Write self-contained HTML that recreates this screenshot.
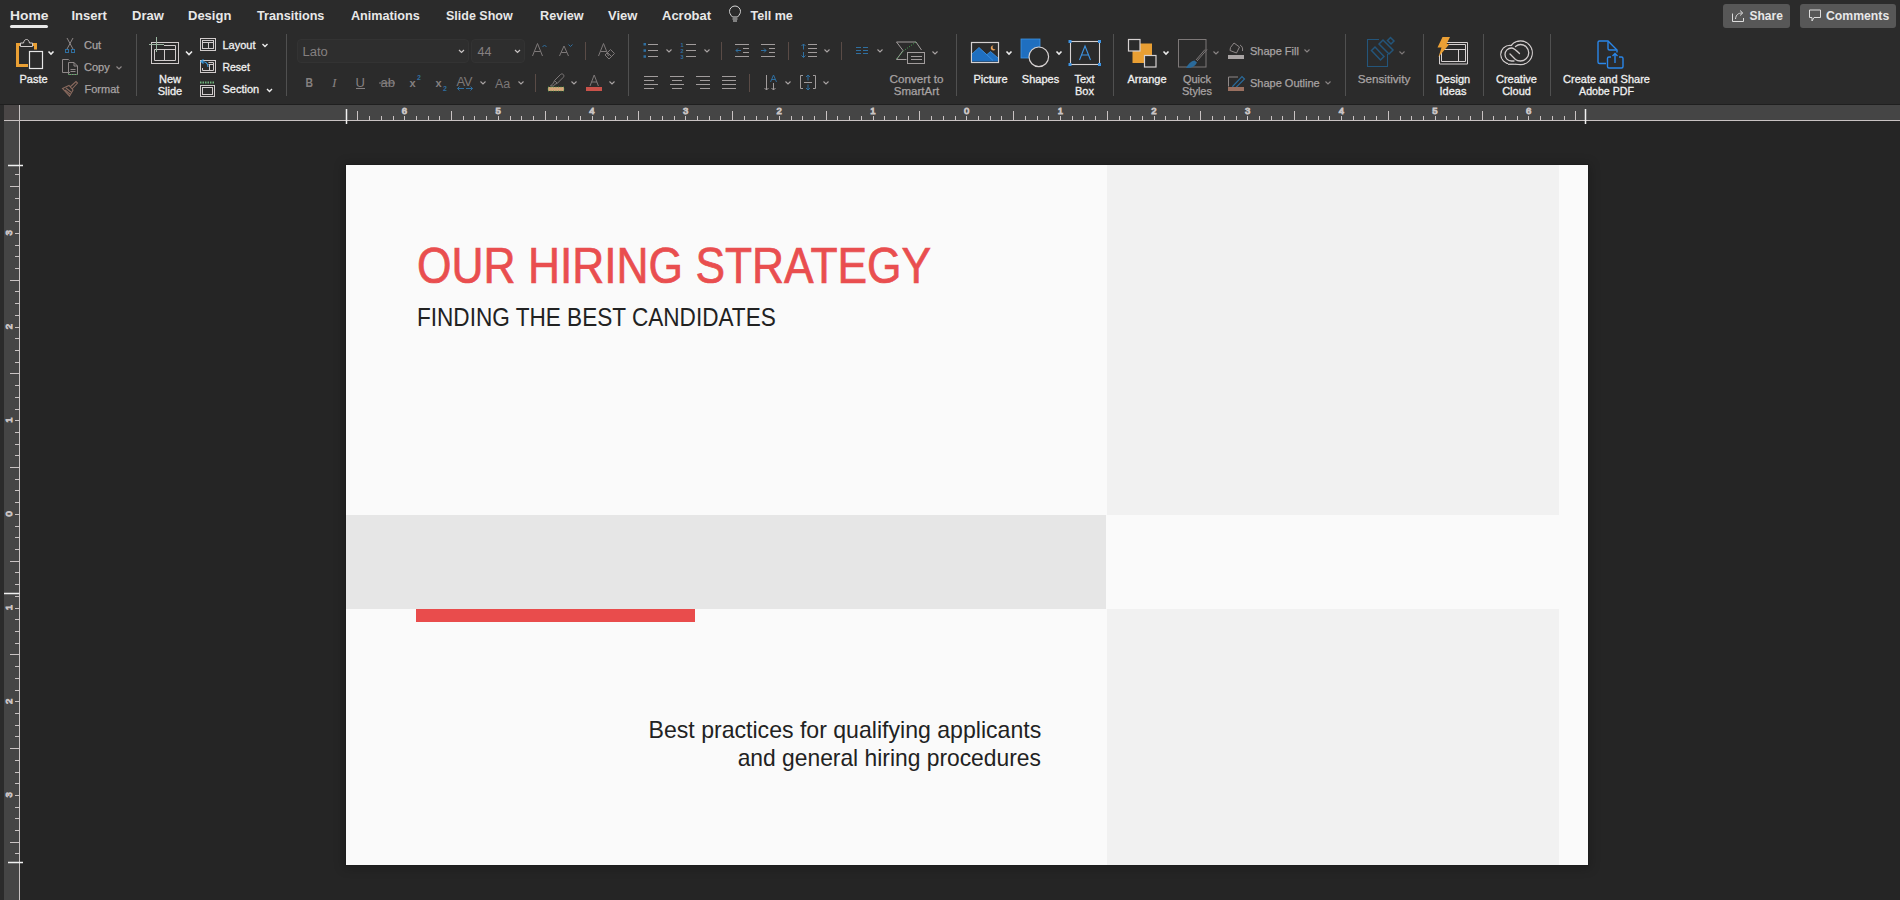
<!DOCTYPE html>
<html><head><meta charset="utf-8">
<style>
*{margin:0;padding:0;box-sizing:border-box}
html,body{width:1900px;height:900px;overflow:hidden;background:#252525;font-family:"Liberation Sans",sans-serif;position:relative}
.abs{position:absolute}
svg{position:absolute;left:0;top:0;overflow:visible}
.rn{font-family:"Liberation Sans",sans-serif;font-size:9.5px;fill:#c8c8c8;text-anchor:middle}
#slide{position:absolute;left:346px;top:165px;width:1242px;height:700px;background:#fafafa;overflow:hidden;box-shadow:0 0 0 1px #1d1d1d,0 1px 10px 2px rgba(0,0,0,0.22)}
.t{position:absolute;white-space:nowrap;font-family:"Liberation Sans",sans-serif}
</style></head><body>
<svg width="1900" height="900" style="z-index:0">
<rect x="0" y="0" width="1900" height="104" fill="#2b2b2b"/>
<rect x="0" y="104" width="1900" height="1" fill="#1f1f1f"/>
<rect x="0" y="105" width="4" height="795" fill="#2b2b2b"/>
<rect x="4" y="105" width="1896" height="15" fill="#454545"/>
<rect x="4" y="120" width="15" height="780" fill="#454545"/>
<rect x="4" y="105" width="15" height="15" fill="#4a4646"/>
<g stroke="#c9c3c3" stroke-width="1" fill="none">
<line x1="4" y1="120.5" x2="1900" y2="120.5"/>
<line x1="19.5" y1="105" x2="19.5" y2="900"/>
<line x1="357.5" y1="111" x2="357.5" y2="120"/>
<line x1="369.5" y1="116" x2="369.5" y2="120"/>
<line x1="381.5" y1="116" x2="381.5" y2="120"/>
<line x1="393.5" y1="116" x2="393.5" y2="120"/>
<line x1="404.5" y1="116" x2="404.5" y2="120"/>
<text x="404.5" y="114" class="rn">6</text>
<line x1="416.5" y1="116" x2="416.5" y2="120"/>
<line x1="428.5" y1="116" x2="428.5" y2="120"/>
<line x1="439.5" y1="116" x2="439.5" y2="120"/>
<line x1="451.5" y1="111" x2="451.5" y2="120"/>
<line x1="463.5" y1="116" x2="463.5" y2="120"/>
<line x1="474.5" y1="116" x2="474.5" y2="120"/>
<line x1="486.5" y1="116" x2="486.5" y2="120"/>
<line x1="498.5" y1="116" x2="498.5" y2="120"/>
<text x="498.2" y="114" class="rn">5</text>
<line x1="510.5" y1="116" x2="510.5" y2="120"/>
<line x1="521.5" y1="116" x2="521.5" y2="120"/>
<line x1="533.5" y1="116" x2="533.5" y2="120"/>
<line x1="545.5" y1="111" x2="545.5" y2="120"/>
<line x1="556.5" y1="116" x2="556.5" y2="120"/>
<line x1="568.5" y1="116" x2="568.5" y2="120"/>
<line x1="580.5" y1="116" x2="580.5" y2="120"/>
<line x1="592.5" y1="116" x2="592.5" y2="120"/>
<text x="591.9" y="114" class="rn">4</text>
<line x1="603.5" y1="116" x2="603.5" y2="120"/>
<line x1="615.5" y1="116" x2="615.5" y2="120"/>
<line x1="627.5" y1="116" x2="627.5" y2="120"/>
<line x1="638.5" y1="111" x2="638.5" y2="120"/>
<line x1="650.5" y1="116" x2="650.5" y2="120"/>
<line x1="662.5" y1="116" x2="662.5" y2="120"/>
<line x1="674.5" y1="116" x2="674.5" y2="120"/>
<line x1="685.5" y1="116" x2="685.5" y2="120"/>
<text x="685.6" y="114" class="rn">3</text>
<line x1="697.5" y1="116" x2="697.5" y2="120"/>
<line x1="709.5" y1="116" x2="709.5" y2="120"/>
<line x1="720.5" y1="116" x2="720.5" y2="120"/>
<line x1="732.5" y1="111" x2="732.5" y2="120"/>
<line x1="744.5" y1="116" x2="744.5" y2="120"/>
<line x1="756.5" y1="116" x2="756.5" y2="120"/>
<line x1="767.5" y1="116" x2="767.5" y2="120"/>
<line x1="779.5" y1="116" x2="779.5" y2="120"/>
<text x="779.2" y="114" class="rn">2</text>
<line x1="791.5" y1="116" x2="791.5" y2="120"/>
<line x1="802.5" y1="116" x2="802.5" y2="120"/>
<line x1="814.5" y1="116" x2="814.5" y2="120"/>
<line x1="826.5" y1="111" x2="826.5" y2="120"/>
<line x1="837.5" y1="116" x2="837.5" y2="120"/>
<line x1="849.5" y1="116" x2="849.5" y2="120"/>
<line x1="861.5" y1="116" x2="861.5" y2="120"/>
<line x1="873.5" y1="116" x2="873.5" y2="120"/>
<text x="872.9" y="114" class="rn">1</text>
<line x1="884.5" y1="116" x2="884.5" y2="120"/>
<line x1="896.5" y1="116" x2="896.5" y2="120"/>
<line x1="908.5" y1="116" x2="908.5" y2="120"/>
<line x1="919.5" y1="111" x2="919.5" y2="120"/>
<line x1="931.5" y1="116" x2="931.5" y2="120"/>
<line x1="943.5" y1="116" x2="943.5" y2="120"/>
<line x1="955.5" y1="116" x2="955.5" y2="120"/>
<line x1="966.5" y1="116" x2="966.5" y2="120"/>
<text x="966.6" y="114" class="rn">0</text>
<line x1="978.5" y1="116" x2="978.5" y2="120"/>
<line x1="990.5" y1="116" x2="990.5" y2="120"/>
<line x1="1001.5" y1="116" x2="1001.5" y2="120"/>
<line x1="1013.5" y1="111" x2="1013.5" y2="120"/>
<line x1="1025.5" y1="116" x2="1025.5" y2="120"/>
<line x1="1037.5" y1="116" x2="1037.5" y2="120"/>
<line x1="1048.5" y1="116" x2="1048.5" y2="120"/>
<line x1="1060.5" y1="116" x2="1060.5" y2="120"/>
<text x="1060.3" y="114" class="rn">1</text>
<line x1="1072.5" y1="116" x2="1072.5" y2="120"/>
<line x1="1083.5" y1="116" x2="1083.5" y2="120"/>
<line x1="1095.5" y1="116" x2="1095.5" y2="120"/>
<line x1="1107.5" y1="111" x2="1107.5" y2="120"/>
<line x1="1119.5" y1="116" x2="1119.5" y2="120"/>
<line x1="1130.5" y1="116" x2="1130.5" y2="120"/>
<line x1="1142.5" y1="116" x2="1142.5" y2="120"/>
<line x1="1154.5" y1="116" x2="1154.5" y2="120"/>
<text x="1154.0" y="114" class="rn">2</text>
<line x1="1165.5" y1="116" x2="1165.5" y2="120"/>
<line x1="1177.5" y1="116" x2="1177.5" y2="120"/>
<line x1="1189.5" y1="116" x2="1189.5" y2="120"/>
<line x1="1200.5" y1="111" x2="1200.5" y2="120"/>
<line x1="1212.5" y1="116" x2="1212.5" y2="120"/>
<line x1="1224.5" y1="116" x2="1224.5" y2="120"/>
<line x1="1236.5" y1="116" x2="1236.5" y2="120"/>
<line x1="1247.5" y1="116" x2="1247.5" y2="120"/>
<text x="1247.6" y="114" class="rn">3</text>
<line x1="1259.5" y1="116" x2="1259.5" y2="120"/>
<line x1="1271.5" y1="116" x2="1271.5" y2="120"/>
<line x1="1282.5" y1="116" x2="1282.5" y2="120"/>
<line x1="1294.5" y1="111" x2="1294.5" y2="120"/>
<line x1="1306.5" y1="116" x2="1306.5" y2="120"/>
<line x1="1318.5" y1="116" x2="1318.5" y2="120"/>
<line x1="1329.5" y1="116" x2="1329.5" y2="120"/>
<line x1="1341.5" y1="116" x2="1341.5" y2="120"/>
<text x="1341.3" y="114" class="rn">4</text>
<line x1="1353.5" y1="116" x2="1353.5" y2="120"/>
<line x1="1364.5" y1="116" x2="1364.5" y2="120"/>
<line x1="1376.5" y1="116" x2="1376.5" y2="120"/>
<line x1="1388.5" y1="111" x2="1388.5" y2="120"/>
<line x1="1400.5" y1="116" x2="1400.5" y2="120"/>
<line x1="1411.5" y1="116" x2="1411.5" y2="120"/>
<line x1="1423.5" y1="116" x2="1423.5" y2="120"/>
<line x1="1435.5" y1="116" x2="1435.5" y2="120"/>
<text x="1435.0" y="114" class="rn">5</text>
<line x1="1446.5" y1="116" x2="1446.5" y2="120"/>
<line x1="1458.5" y1="116" x2="1458.5" y2="120"/>
<line x1="1470.5" y1="116" x2="1470.5" y2="120"/>
<line x1="1482.5" y1="111" x2="1482.5" y2="120"/>
<line x1="1493.5" y1="116" x2="1493.5" y2="120"/>
<line x1="1505.5" y1="116" x2="1505.5" y2="120"/>
<line x1="1517.5" y1="116" x2="1517.5" y2="120"/>
<line x1="1528.5" y1="116" x2="1528.5" y2="120"/>
<text x="1528.7" y="114" class="rn">6</text>
<line x1="1540.5" y1="116" x2="1540.5" y2="120"/>
<line x1="1552.5" y1="116" x2="1552.5" y2="120"/>
<line x1="1564.5" y1="116" x2="1564.5" y2="120"/>
<line x1="1575.5" y1="111" x2="1575.5" y2="120"/>
<line x1="15" y1="174.5" x2="19" y2="174.5"/>
<line x1="10" y1="186.5" x2="19" y2="186.5"/>
<line x1="15" y1="198.5" x2="19" y2="198.5"/>
<line x1="15" y1="209.5" x2="19" y2="209.5"/>
<line x1="15" y1="221.5" x2="19" y2="221.5"/>
<line x1="15" y1="233.5" x2="19" y2="233.5"/>
<text transform="translate(12 232.9) rotate(-90)" class="rn">3</text>
<line x1="15" y1="245.5" x2="19" y2="245.5"/>
<line x1="15" y1="256.5" x2="19" y2="256.5"/>
<line x1="15" y1="268.5" x2="19" y2="268.5"/>
<line x1="10" y1="280.5" x2="19" y2="280.5"/>
<line x1="15" y1="291.5" x2="19" y2="291.5"/>
<line x1="15" y1="303.5" x2="19" y2="303.5"/>
<line x1="15" y1="315.5" x2="19" y2="315.5"/>
<line x1="15" y1="327.5" x2="19" y2="327.5"/>
<text transform="translate(12 326.5) rotate(-90)" class="rn">2</text>
<line x1="15" y1="338.5" x2="19" y2="338.5"/>
<line x1="15" y1="350.5" x2="19" y2="350.5"/>
<line x1="15" y1="362.5" x2="19" y2="362.5"/>
<line x1="10" y1="373.5" x2="19" y2="373.5"/>
<line x1="15" y1="385.5" x2="19" y2="385.5"/>
<line x1="15" y1="397.5" x2="19" y2="397.5"/>
<line x1="15" y1="409.5" x2="19" y2="409.5"/>
<line x1="15" y1="420.5" x2="19" y2="420.5"/>
<text transform="translate(12 420.2) rotate(-90)" class="rn">1</text>
<line x1="15" y1="432.5" x2="19" y2="432.5"/>
<line x1="15" y1="444.5" x2="19" y2="444.5"/>
<line x1="15" y1="455.5" x2="19" y2="455.5"/>
<line x1="10" y1="467.5" x2="19" y2="467.5"/>
<line x1="15" y1="479.5" x2="19" y2="479.5"/>
<line x1="15" y1="490.5" x2="19" y2="490.5"/>
<line x1="15" y1="502.5" x2="19" y2="502.5"/>
<line x1="15" y1="514.5" x2="19" y2="514.5"/>
<text transform="translate(12 513.9) rotate(-90)" class="rn">0</text>
<line x1="15" y1="526.5" x2="19" y2="526.5"/>
<line x1="15" y1="537.5" x2="19" y2="537.5"/>
<line x1="15" y1="549.5" x2="19" y2="549.5"/>
<line x1="10" y1="561.5" x2="19" y2="561.5"/>
<line x1="15" y1="572.5" x2="19" y2="572.5"/>
<line x1="15" y1="584.5" x2="19" y2="584.5"/>
<line x1="15" y1="596.5" x2="19" y2="596.5"/>
<line x1="15" y1="608.5" x2="19" y2="608.5"/>
<text transform="translate(12 607.6) rotate(-90)" class="rn">1</text>
<line x1="15" y1="619.5" x2="19" y2="619.5"/>
<line x1="15" y1="631.5" x2="19" y2="631.5"/>
<line x1="15" y1="643.5" x2="19" y2="643.5"/>
<line x1="10" y1="654.5" x2="19" y2="654.5"/>
<line x1="15" y1="666.5" x2="19" y2="666.5"/>
<line x1="15" y1="678.5" x2="19" y2="678.5"/>
<line x1="15" y1="690.5" x2="19" y2="690.5"/>
<line x1="15" y1="701.5" x2="19" y2="701.5"/>
<text transform="translate(12 701.3) rotate(-90)" class="rn">2</text>
<line x1="15" y1="713.5" x2="19" y2="713.5"/>
<line x1="15" y1="725.5" x2="19" y2="725.5"/>
<line x1="15" y1="736.5" x2="19" y2="736.5"/>
<line x1="10" y1="748.5" x2="19" y2="748.5"/>
<line x1="15" y1="760.5" x2="19" y2="760.5"/>
<line x1="15" y1="772.5" x2="19" y2="772.5"/>
<line x1="15" y1="783.5" x2="19" y2="783.5"/>
<line x1="15" y1="795.5" x2="19" y2="795.5"/>
<text transform="translate(12 794.9) rotate(-90)" class="rn">3</text>
<line x1="15" y1="807.5" x2="19" y2="807.5"/>
<line x1="15" y1="818.5" x2="19" y2="818.5"/>
<line x1="15" y1="830.5" x2="19" y2="830.5"/>
<line x1="10" y1="842.5" x2="19" y2="842.5"/>
<line x1="15" y1="853.5" x2="19" y2="853.5"/>
</g>
<g stroke="#f0f0f0" stroke-width="1.5" fill="none">
<line x1="346.5" y1="109" x2="346.5" y2="124"/>
<line x1="1585.5" y1="109" x2="1585.5" y2="124"/>
<line x1="8" y1="165.5" x2="23" y2="165.5"/>
<line x1="8" y1="862.5" x2="23" y2="862.5"/>
<line x1="4" y1="593.5" x2="19.5" y2="593.5"/>
</g>

<style>
.tb{font-family:"Liberation Sans",sans-serif;font-size:13px;font-weight:bold;fill:#e8e8e8}
.lb{font-family:"Liberation Sans",sans-serif;font-size:11px;fill:#f0f0f0;stroke:#f0f0f0;stroke-width:0.3px}
.lg{font-family:"Liberation Sans",sans-serif;font-size:11px;fill:#a8a3a3;stroke:#a8a3a3;stroke-width:0.25px}
.lc{text-anchor:middle}
</style>
<!-- tabs -->
<text textLength="38.5" lengthAdjust="spacingAndGlyphs" class="tb" x="10" y="20">Home</text>
<rect x="10" y="25" width="38" height="3" rx="1.5" fill="#e8e8e8"/>
<text class="tb" x="71.5" y="20">Insert</text>
<text class="tb" x="132" y="20">Draw</text>
<text class="tb" x="188" y="20">Design</text>
<text textLength="67.4" lengthAdjust="spacingAndGlyphs" class="tb" x="257" y="20">Transitions</text>
<text textLength="68.8" lengthAdjust="spacingAndGlyphs" class="tb" x="351" y="20">Animations</text>
<text textLength="66.7" lengthAdjust="spacingAndGlyphs" class="tb" x="446" y="20">Slide Show</text>
<text textLength="43.6" lengthAdjust="spacingAndGlyphs" class="tb" x="540" y="20">Review</text>
<text class="tb" x="608" y="20">View</text>
<text class="tb" x="662" y="20">Acrobat</text>
<g fill="none" stroke="#d8d8d8" stroke-width="1">
<path d="M732.5 17 C730 14.5 729.5 12.5 729.5 11.5 A5.5 5.5 0 0 1 740.5 11.5 C740.5 12.5 740 14.5 737.5 17 Z"/>
<line x1="732.5" y1="19" x2="737.5" y2="19"/>
<line x1="733" y1="21" x2="737" y2="21"/>
</g>
<text textLength="42.3" lengthAdjust="spacingAndGlyphs" class="tb" x="750.5" y="20">Tell me</text>
<!-- share / comments -->
<rect x="1723" y="4" width="67" height="24" rx="3" fill="#575757"/>
<text textLength="33.3" lengthAdjust="spacingAndGlyphs" class="tb" x="1749.5" y="19.8">Share</text>
<g fill="none" stroke="#dcdcdc" stroke-width="1">
<path d="M1732.5 13.5 V21.5 H1743.5 V18"/>
<path d="M1735.5 19 C1736 14.5 1738.5 13 1742 13 M1740 10.5 L1742.8 13 L1740 15.5"/>
</g>
<rect x="1800" y="4" width="96" height="24" rx="3" fill="#575757"/>
<text textLength="63.2" lengthAdjust="spacingAndGlyphs" class="tb" x="1826" y="19.8">Comments</text>
<path d="M1809.5 10 H1820.5 V17.5 H1814 L1812 21 V17.5 H1809.5 Z" fill="none" stroke="#dcdcdc" stroke-width="1"/>

<!-- separators -->
<g stroke="#505050" stroke-width="1">
<line x1="136.5" y1="34" x2="136.5" y2="96"/>
<line x1="286.5" y1="34" x2="286.5" y2="96"/>
<line x1="628.5" y1="34" x2="628.5" y2="96"/>
<line x1="956.5" y1="34" x2="956.5" y2="96"/>
<line x1="1113.5" y1="34" x2="1113.5" y2="96"/>
<line x1="1345.5" y1="34" x2="1345.5" y2="96"/>
<line x1="1423.5" y1="34" x2="1423.5" y2="96"/>
<line x1="1483.5" y1="34" x2="1483.5" y2="96"/>
<line x1="1550.5" y1="34" x2="1550.5" y2="96"/>
</g>
<g stroke="#5a4b46" stroke-width="1">
<line x1="585.5" y1="42" x2="585.5" y2="60"/>
<line x1="535.5" y1="74" x2="535.5" y2="92"/>
<line x1="721.5" y1="42" x2="721.5" y2="60"/>
<line x1="788.5" y1="42" x2="788.5" y2="60"/>
<line x1="841.5" y1="42" x2="841.5" y2="60"/>
<line x1="749.5" y1="74" x2="749.5" y2="92"/>
</g>

<!-- Clipboard group -->
<path d="M17.5 44.5 V65.5 H28" fill="none" stroke="#eaa034" stroke-width="3"/>
<path d="M16 44.5 H20.5 M32.5 44.5 H35.5 V49.5" fill="none" stroke="#eaa034" stroke-width="3"/>
<path d="M20.5 46.5 V43 H23.5 C24 40.5 25 39.5 26.5 39.5 C28 39.5 29 40.5 29.5 43 H32.5 V46.5 Z" fill="#2b2b2b" stroke="#cfcaca" stroke-width="1"/>
<rect x="29.5" y="51.5" width="13" height="17" fill="none" stroke="#e6e6e6" stroke-width="1.2"/>
<path d="M48.5 51.5 L51 54 L53.5 51.5" fill="none" stroke="#ececec" stroke-width="1.6"/>
<text class="lb" x="19.5" y="83">Paste</text>

<g fill="none" stroke="#8e8888" stroke-width="1">
<path d="M67 38 L73 49 M73 38 L67 49"/>
</g>
<rect x="65.5" y="49.5" width="3" height="3" fill="none" stroke="#2f6fa0" stroke-width="1"/>
<rect x="71.5" y="49.5" width="3" height="3" fill="none" stroke="#2f6fa0" stroke-width="1"/>
<text class="lg" x="84" y="49">Cut</text>
<g fill="none" stroke="#8e8888" stroke-width="1">
<path d="M70 72.5 H62.5 V59.5 H68.5 L69.5 60.5"/>
<path d="M68.5 74.5 V62.5 H74 L77.5 66 V74.5 Z M74 62.5 V66 H77.5"/>
<path d="M70.5 69.5 H75.5 M70.5 71.5 H75.5"/>
</g>
<line x1="68.5" y1="74.5" x2="77.5" y2="74.5" stroke="#3aa04a" stroke-width="1" stroke-dasharray="1 1.5"/>
<text class="lg" x="84" y="71">Copy</text>
<path d="M116.5 66.5 L119 69 L121.5 66.5" fill="none" stroke="#8e8888" stroke-width="1.2"/>
<g fill="none" stroke="#8a6a5e" stroke-width="1.1">
<path d="M70 87 L76 81.5 L77.5 83 L72 89"/>
<path d="M62.5 88.5 L69 85.5 L73 90 L69.5 96 Z"/>
<path d="M65 90 L70 94 M66 88 L71 92"/>
</g>
<text class="lg" x="84.5" y="93">Format</text>

<!-- Slides group -->
<g fill="none" stroke="#d0cbcb" stroke-width="1">
<rect x="151.5" y="42.5" width="27" height="21"/>
<path d="M164 45.5 H175.5 V60.5 H154.5 V49.5 M154.5 49.5 H175.5 M164.5 49.5 V60.5"/>
</g>
<g stroke="#9ab5a0" stroke-width="1" fill="none">
<line x1="156.5" y1="37" x2="156.5" y2="52"/>
<line x1="149" y1="44.5" x2="164" y2="44.5"/>
</g>
<path d="M186 51.5 L189 54.5 L192 51.5" fill="none" stroke="#ececec" stroke-width="1.6"/>
<text class="lb lc" x="170" y="83">New</text>
<text class="lb lc" x="170" y="95">Slide</text>

<g fill="none" stroke="#d0cbcb" stroke-width="1">
<rect x="200.5" y="38.5" width="15" height="12"/>
<rect x="202.5" y="40.5" width="11" height="8"/>
<path d="M202.5 42.5 H213.5 M208.5 42.5 V48.5"/>
<rect x="200.5" y="60.5" width="15" height="12"/>
<path d="M208.5 62.5 H213.5 V70.5 H202.5 V68 M208.5 64.5 H213.5 M209.5 64.5 V70.5"/>
<rect x="200.5" y="85.5" width="14" height="11"/>
<rect x="202.5" y="87.5" width="10" height="7"/>
</g>
<path d="M208 67 C208 63 205.5 61.5 201.5 61.5 M203.5 59.5 L201 61.5 L203.5 63.5" fill="none" stroke="#3a9be0" stroke-width="1.1"/>
<line x1="200" y1="82.5" x2="215" y2="82.5" stroke="#6fb37a" stroke-width="2" stroke-dasharray="1.5 1"/>
<text class="lb" x="222.5" y="49">Layout</text>
<path d="M262.5 44 L265 46.5 L267.5 44" fill="none" stroke="#ececec" stroke-width="1.4"/>
<text textLength="27.3" lengthAdjust="spacingAndGlyphs" class="lb" x="222.5" y="71">Reset</text>
<text class="lb" x="222.5" y="93">Section</text>
<path d="M267 89 L269.5 91.5 L272 89" fill="none" stroke="#ececec" stroke-width="1.4"/>

<!-- Font group -->
<rect x="297.5" y="39.5" width="171" height="23" rx="3.5" fill="#2e2e2e" stroke="#333" stroke-width="1"/>
<rect x="471.5" y="39.5" width="53" height="23" rx="3.5" fill="#2e2e2e" stroke="#333" stroke-width="1"/>
<text textLength="25.3" lengthAdjust="spacingAndGlyphs" x="302.5" y="56" style="font-family:'Liberation Sans';font-size:12.5px;fill:#858080">Lato</text>
<text x="477.5" y="56" style="font-family:'Liberation Sans';font-size:12.5px;fill:#858080">44</text>
<g fill="none" stroke="#c8c4c4" stroke-width="1.2">
<path d="M459 50 L461.5 52.5 L464 50"/>
<path d="M515 50 L517.5 52.5 L520 50"/>
</g>
<g fill="none" stroke="#7d7878" stroke-width="1">
<path d="M532.5 56 L537.5 43.5 L542.5 56 M534.5 51.5 H540.5"/>
<path d="M559.5 56 L564 46 L568.5 56 M561.2 52.5 H566.8"/>
<path d="M598.5 56 L603.5 43.5 L608.5 56 M600.5 51.5 H606.5"/>
<path d="M605 55 L610.5 49.5 L614.5 53.5 L609 59 Z M607.5 52.5 L611.5 56.5"/>
</g>
<g fill="none" stroke="#2f6fa0" stroke-width="1">
<path d="M542.5 47 L544.5 45 L546.5 47"/>
<path d="M568.5 44.5 L570.5 46.5 L572.5 44.5"/>
</g>
<text x="305.5" y="86.5" style="font-family:'Liberation Sans';font-weight:bold;font-size:12.5px;fill:#858080" textLength="7.5" lengthAdjust="spacingAndGlyphs">B</text>
<text x="332" y="86.5" style="font-family:'Liberation Serif';font-style:italic;font-size:13.5px;fill:#858080">I</text>
<text x="355.5" y="86.5" style="font-family:'Liberation Sans';font-size:13px;fill:#858080">U</text>
<line x1="356" y1="88.5" x2="365" y2="88.5" stroke="#858080" stroke-width="1"/>
<text x="380.5" y="86.5" style="font-family:'Liberation Sans';font-size:13px;fill:#858080">ab</text>
<line x1="379" y1="83" x2="395" y2="83" stroke="#858080" stroke-width="1"/>
<text x="409.5" y="86.5" style="font-family:'Liberation Sans';font-weight:bold;font-size:11px;fill:#858080">x</text>
<text x="417" y="80" style="font-family:'Liberation Sans';font-weight:bold;font-size:7px;fill:#2f6fa0">2</text>
<text x="435.5" y="86.5" style="font-family:'Liberation Sans';font-weight:bold;font-size:11px;fill:#858080">x</text>
<text x="443" y="91" style="font-family:'Liberation Sans';font-weight:bold;font-size:7px;fill:#2f6fa0">2</text>
<text x="456.5" y="86" style="font-family:'Liberation Sans';font-size:13px;fill:#7d7878;letter-spacing:-0.5px">AV</text>
<g fill="none" stroke="#2f6fa0" stroke-width="1">
<path d="M457.5 88.5 H464 M459.5 86.5 L457.5 88.5 L459.5 90.5 M466 88.5 H472.5 M470.5 86.5 L472.5 88.5 L470.5 90.5"/>
</g>
<text x="495" y="88" style="font-family:'Liberation Sans';font-size:12.5px;fill:#7d7878">Aa</text>
<g fill="none" stroke="#a9a4a4" stroke-width="1.1">
<path d="M666.5 49.5 L669 52 L671.5 49.5"/>
<path d="M704.5 49.5 L707 52 L709.5 49.5"/>
<path d="M480.5 81.5 L483 84 L485.5 81.5"/>
<path d="M518.5 81.5 L521 84 L523.5 81.5"/>
<path d="M571.5 81.5 L574 84 L576.5 81.5"/>
<path d="M609.5 81.5 L612 84 L614.5 81.5"/>
<path d="M824.5 49.5 L827 52 L829.5 49.5"/>
<path d="M877.5 49.5 L880 52 L882.5 49.5"/>
<path d="M785.5 81.5 L788 84 L790.5 81.5"/>
<path d="M823.5 81.5 L826 84 L828.5 81.5"/>
<path d="M932.5 51.5 L935 54 L937.5 51.5"/>
</g>
<g fill="none" stroke="#7d7878" stroke-width="1">
<path d="M550.5 86 L553.5 83 L554.5 80.5 L560.5 74.5 C561.3 73.7 562.5 73.7 563.3 74.5 C564.1 75.3 564.1 76.5 563.3 77.3 L557.3 83.3 L554.8 84.3 L553.5 86 Z M554.5 80.5 L557.3 83.3"/>
<path d="M590 86 L594.2 75 L598.4 86 M591.5 82 H597"/>
</g>
<rect x="548" y="87" width="16" height="4" fill="#d6a57a"/>
<rect x="548" y="87" width="16" height="4" fill="none" stroke="#3aa04a" stroke-width="0.8" stroke-dasharray="1 1.5"/>
<rect x="586" y="87" width="16" height="4" fill="#c9524a"/>

<!-- Paragraph group -->
<g fill="#2f6fa0">
<rect x="643.5" y="43" width="2.5" height="2.5"/>
<rect x="643.5" y="49.3" width="2.5" height="2.5"/>
<rect x="643.5" y="55.3" width="2.5" height="2.5"/>
</g>
<text x="680.5" y="47" style="font-family:'Liberation Sans';font-weight:bold;font-size:5.5px;fill:#2f6fa0">1</text>
<text x="680.5" y="53" style="font-family:'Liberation Sans';font-weight:bold;font-size:5.5px;fill:#2f6fa0">2</text>
<text x="680.5" y="59" style="font-family:'Liberation Sans';font-weight:bold;font-size:5.5px;fill:#2f6fa0">3</text>
<g stroke="#a19c9c" stroke-width="1" fill="none">
<path d="M648 44.5 H658 M648 50.5 H658 M648 56.5 H658"/>
<path d="M686 44.5 H696 M686 50.5 H696 M686 56.5 H696"/>
<path d="M735 44.5 H749 M743 48.5 H749 M743 52.5 H749 M735 56.5 H749"/>
<path d="M761 44.5 H775 M769 48.5 H775 M769 52.5 H775 M761 56.5 H775"/>
<path d="M808 44.5 H817 M808 48.5 H817 M808 52.5 H817 M808 56.5 H817"/>
<path d="M644 76.5 H658 M644 80.5 H654 M644 84.5 H658 M644 88.5 H654"/>
<path d="M670 76.5 H684 M672 80.5 H682 M670 84.5 H684 M672 88.5 H682"/>
<path d="M696 76.5 H710 M700 80.5 H710 M696 84.5 H710 M700 88.5 H710"/>
<path d="M722 76.5 H736 M722 80.5 H736 M722 84.5 H736 M722 88.5 H736"/>
<path d="M766.5 75 V90 M764.5 88 L766.5 90 L768.5 88 M773.5 83 V90 M771.5 88 L773.5 90 L775.5 88"/>
<path d="M803 75.5 H800.5 V88.5 H803 M813 75.5 H815.5 V88.5 H813 M804 82.5 H812"/>
<path d="M896.5 42 H916 L921.5 50 M896.5 42 L903 50.5 L896.5 59.5 H906.5"/>
<rect x="907.5" y="52.5" width="17" height="11"/>
<path d="M911 56.5 H922 M911 59.5 H922"/>
</g>
<g stroke="#2f6fa0" stroke-width="1" fill="none">
<path d="M741 50.5 H736 M738 48.5 L736 50.5 L738 52.5"/>
<path d="M761 50.5 H766 M764 48.5 L766 50.5 L764 52.5"/>
<path d="M803.5 44 V49.5 M801.5 46 L803.5 44 L805.5 46 M803.5 52 V57.5 M801.5 55.5 L803.5 57.5 L805.5 55.5"/>
<path d="M770.5 82 L773.5 75 L776.5 82 M771.6 79.5 H775.4"/>
<path d="M808 75 V80.5 M806 77 L808 75 L810 77 M808 84.5 V90 M806 88 L808 90 L810 88"/>
<path d="M856 47.5 H861 M856 50.5 H861 M856 53.5 H861 M863 47.5 H868 M863 50.5 H868 M863 53.5 H868"/>
</g>
<path d="M916 42 L904 50.5 L896 59.5" fill="none" stroke="#4cbf5a" stroke-width="0.8" stroke-dasharray="1 1.5"/>
<text textLength="53.8" lengthAdjust="spacingAndGlyphs" class="lg lc" x="916.5" y="83">Convert to</text>
<text textLength="45.4" lengthAdjust="spacingAndGlyphs" class="lg lc" x="916.5" y="94.5">SmartArt</text>

<!-- Insert group -->
<rect x="971.5" y="42.5" width="27" height="20" fill="#2b2b2b" stroke="#d6d1d1" stroke-width="1.2"/>
<path d="M972 61.5 V54 L979 47.5 L987 54.5 L990.5 51.5 L998 58 V61.5 Z" fill="#1f6fc0"/>
<path d="M972 54 L979 47.5 L993 60.5 M987 54.5 L990.5 51.5 L998 58" fill="none" stroke="#3d94e4" stroke-width="0.8"/>
<path d="M993.5 45.5 A2.5 2.5 0 1 0 995.5 49 A2 2 0 0 1 993.5 45.5 Z" fill="#e9a25a"/>
<path d="M1006.5 51.5 L1009 54 L1011.5 51.5" fill="none" stroke="#ececec" stroke-width="1.6"/>
<rect x="1021" y="39" width="19" height="19" fill="#1f6fc0" stroke="#3d94e4" stroke-width="0.8"/>
<circle cx="1038.8" cy="56.8" r="9.8" fill="#2b2b2b" stroke="#d6d1d1" stroke-width="1.2"/>
<path d="M1056.5 51.5 L1059 54 L1061.5 51.5" fill="none" stroke="#ececec" stroke-width="1.6"/>
<rect x="1070.5" y="41.5" width="29" height="23" fill="none" stroke="#d6d1d1" stroke-width="1.1"/>
<g fill="#3d94e4">
<rect x="1068.5" y="40" width="3" height="3"/>
<rect x="1098" y="40" width="3" height="3"/>
<rect x="1068.5" y="63" width="3" height="3"/>
<rect x="1098" y="63" width="3" height="3"/>
</g>
<path d="M1079.5 60 L1085 46 L1090.5 60 M1081.5 55 H1088.5" fill="none" stroke="#3d94e4" stroke-width="1.1"/>
<text class="lb lc" x="990.5" y="83">Picture</text>
<text class="lb lc" x="1040.5" y="83">Shapes</text>
<text class="lb lc" x="1084.5" y="83">Text</text>
<text class="lb lc" x="1084.5" y="95">Box</text>

<!-- Drawing group -->
<rect x="1132.5" y="43.5" width="19.5" height="19.5" fill="#e99f33"/>
<rect x="1128.5" y="39.5" width="11.5" height="11.5" fill="#2b2b2b" stroke="#d6d1d1" stroke-width="1.2"/>
<rect x="1144.5" y="55.5" width="11.5" height="11.5" fill="#2b2b2b" stroke="#d6d1d1" stroke-width="1.2"/>
<path d="M1163.5 51.5 L1166 54 L1168.5 51.5" fill="none" stroke="#ececec" stroke-width="1.6"/>
<text class="lb lc" x="1147" y="83">Arrange</text>
<rect x="1178.5" y="39.5" width="27.5" height="27.5" fill="none" stroke="#7d7878" stroke-width="1"/>
<path d="M1207 49.5 L1197 61 M1205 49.5 L1196 60" fill="none" stroke="#7d7878" stroke-width="1"/>
<path d="M1186 68 C1188 64 1191 61 1194.5 60.5 L1197 62.5 C1195 66.5 1191 68.5 1186 68 Z" fill="#2a6a9a"/>
<path d="M1213.5 51.5 L1216 54 L1218.5 51.5" fill="none" stroke="#8a8585" stroke-width="1.2"/>
<text class="lg lc" x="1197" y="83">Quick</text>
<text class="lg lc" x="1197" y="94.5">Styles</text>
<g fill="none" stroke="#8e8888" stroke-width="1">
<path d="M1230.5 47.5 L1234 43 L1239.5 47 L1236.5 53 L1230 50.5 Z"/>
<path d="M1240 45 C1242 46 1243 48 1242.5 51"/>
<path d="M1228.5 77 H1238 M1228.5 77 V86.5"/>
</g>
<rect x="1228" y="55" width="16" height="4" fill="#a9a4a4"/>
<path d="M1233 86 L1242 76.5 L1244.5 79 L1235.5 88 L1232 88.5 Z" fill="none" stroke="#2a6a9a" stroke-width="1.2"/>
<rect x="1228" y="87" width="16" height="4" fill="#9a7060"/>
<text class="lg" x="1250" y="55">Shape Fill</text>
<path d="M1304.5 49.5 L1307 52 L1309.5 49.5" fill="none" stroke="#8a8585" stroke-width="1.1"/>
<text class="lg" x="1250" y="87">Shape Outline</text>
<path d="M1325.5 81.5 L1328 84 L1330.5 81.5" fill="none" stroke="#8a8585" stroke-width="1.1"/>

<!-- Sensitivity -->
<g fill="none" stroke="#24557a" stroke-width="1.1">
<path d="M1379 39.5 H1367.5 V66.5 H1387.5 V54"/>
</g>
<g fill="none" stroke="#24557a" stroke-width="1.5">
<path d="M1379 44 L1383 40 L1393 50 L1389 54 Z"/>
<path d="M1387.5 40.5 L1390.5 37.5 L1394 41 L1391 44 Z"/>
<path d="M1371.5 50.5 L1375 47 L1384 56.5 L1380.5 60 Z"/>
</g>
<path d="M1399.5 51.5 L1402 54 L1404.5 51.5" fill="none" stroke="#7d7878" stroke-width="1.1"/>
<text textLength="52.5" lengthAdjust="spacingAndGlyphs" class="lg lc" x="1384" y="83">Sensitivity</text>

<!-- Design Ideas -->
<g fill="none" stroke="#d6d1d1" stroke-width="1">
<path d="M1445.5 42.5 H1467.5 V64 H1439.5 V55"/>
<path d="M1449 44.5 H1465.5 V61.5 H1441.5 V49"/>
<path d="M1443 49.5 H1465.5 M1458.5 49.5 V61.5"/>
</g>
<path d="M1442.5 37 H1450 L1446.5 44 H1449.5 L1438.5 57 L1441.5 47.5 H1437.5 Z" fill="#eba035"/>
<text class="lb lc" x="1453" y="83">Design</text>
<text class="lb lc" x="1453" y="95">Ideas</text>

<!-- Creative Cloud -->
<g stroke="#d0cbcb" stroke-width="1.3" fill="none">
<circle cx="1520.5" cy="52.8" r="11.8"/>
<circle cx="1510" cy="54.5" r="9.2"/>
<line x1="1508" y1="64.2" x2="1522" y2="64.2"/>
</g>
<g fill="#2b2b2b">
<circle cx="1520.5" cy="52.8" r="11.1"/>
<circle cx="1510" cy="54.5" r="8.5"/>
<rect x="1508" y="55" width="14" height="8.6"/>
</g>
<g stroke="#d0cbcb" stroke-width="1.3" fill="none" stroke-linecap="round">
<path d="M1514 61 H1511.5 A6.5 6.5 0 0 1 1511.5 48 C1514 48 1515.5 49.5 1519.5 53.5"/>
<path d="M1510 54 L1515.5 59.5 C1517 60.7 1518.5 61 1520.5 61 A8.25 8.25 0 0 0 1520.5 44.5 C1518.5 44.5 1517 45.3 1515.5 46.5"/>
</g>
<text class="lb lc" x="1516.5" y="83">Creative</text>
<text class="lb lc" x="1516.5" y="95">Cloud</text>

<!-- Adobe PDF -->
<g fill="none" stroke="#2a86e8" stroke-width="1.4">
<path d="M1606 63.5 H1599.5 C1598.5 63.5 1598 63 1598 62 V42.5 C1598 41.5 1598.5 41 1599.5 41 H1608 L1617 50 V52.5"/>
<path d="M1608 41.5 V48.5 C1608 49.5 1608.5 50 1609.5 50 H1616.5"/>
<path d="M1611 57 H1609 C1608 57 1607.5 57.5 1607.5 58.5 V66.5 C1607.5 67.5 1608 68 1609 68 H1621.5 C1622.5 68 1623 67.5 1623 66.5 V58.5 C1623 57.5 1622.5 57 1621.5 57 H1619"/>
<path d="M1615 63 V53.5 M1612.5 56 L1615 53.5 L1617.5 56"/>
</g>
<text class="lb lc" x="1606.5" y="83">Create and Share</text>
<text textLength="54.9" lengthAdjust="spacingAndGlyphs" class="lb lc" x="1606.5" y="95">Adobe PDF</text>

</svg>
<div id="slide">
  <div class="abs" style="left:761px;top:0;width:452px;height:350px;background:#f1f1f1"></div>
  <div class="abs" style="left:761px;top:444px;width:452px;height:256px;background:#f1f1f1"></div>
  <div class="abs" style="left:0;top:350px;width:760px;height:94px;background:#e6e6e6"></div>
  <div class="abs" style="left:70px;top:444px;width:279px;height:13px;background:#e94c4c"></div>
  <div class="t" style="left:71px;top:72px;font-size:50px;line-height:58px;color:#e94e4f;-webkit-text-stroke:0.7px #e94e4f;transform:scaleX(0.887);transform-origin:0 0">OUR HIRING STRATEGY</div>
  <div class="t" style="left:71px;top:138px;font-size:25px;line-height:29px;color:#222;transform:scaleX(0.903);transform-origin:0 0">FINDING THE BEST CANDIDATES</div>
  <div class="t" style="right:547px;top:551px;font-size:24px;line-height:28px;color:#222;text-align:right;transform:scaleX(0.962);transform-origin:100% 0">Best practices for qualifying applicants</div>
  <div class="t" style="right:547px;top:579px;font-size:24px;line-height:28px;color:#222;text-align:right;transform:scaleX(0.951);transform-origin:100% 0">and general hiring procedures</div>
</div>
</body></html>
